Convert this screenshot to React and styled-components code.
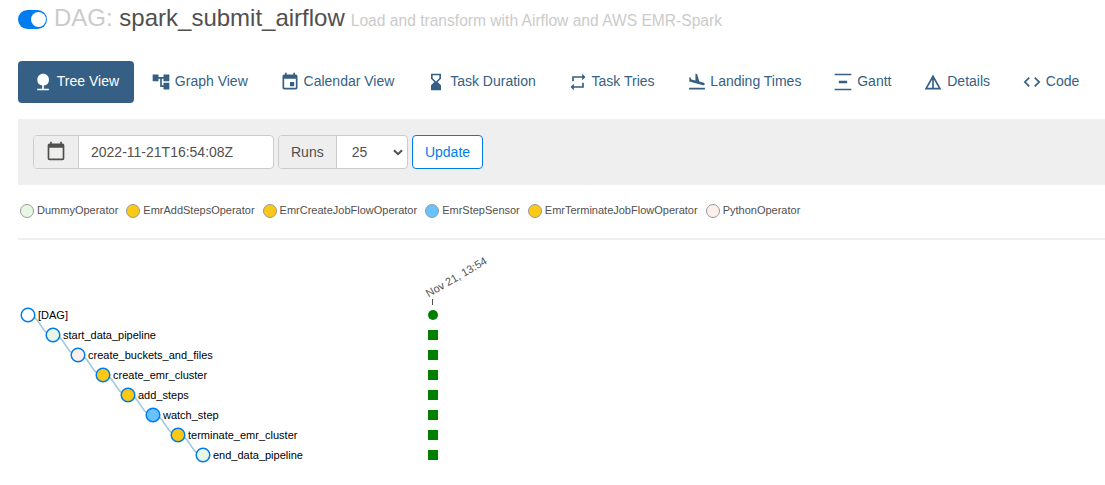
import React from "react";
import styled, { createGlobalStyle } from "styled-components";
import {
  MdNature,
  MdAccountTree,
  MdEvent,
  MdHourglassBottom,
  MdRepeat,
  MdFlightLand,
  MdVerticalDistribute,
  MdDetails,
  MdCode,
  MdCalendarToday,
} from "react-icons/md";

const GlobalStyle = createGlobalStyle`
  *, *::before, *::after { box-sizing: border-box; }
  body {
    margin: 0;
    overflow: hidden;
    background: #fff;
    color: #51504f;
    font: 14px/20px "Liberation Sans", Arial, sans-serif;
  }
`;

const Page = styled.main`
  padding-left: 18px;
`;

const Header = styled.header`
  display: flex;
  align-items: baseline;
  height: 36px;
  padding-top: 5px;
`;

const Toggle = styled.span`
  display: flex;
  align-self: flex-start;
  justify-content: flex-end;
  width: 29px;
  height: 19px;
  margin: 5px 7px 0 0;
  padding: 2px 1px;
  border-radius: 10px;
  background: #017cee;

  &::after {
    content: "";
    width: 15px;
    height: 15px;
    border-radius: 50%;
    background: #fff;
  }
`;

const Title = styled.h3`
  margin: 0;
  font-size: 24px;
  font-weight: 400;
  line-height: 26px;
  white-space: pre;
`;

const Muted = styled.span`
  color: #cbcbcb;
`;

const Description = styled(Muted)`
  margin-left: 6px;
  font-size: 15.6px;
`;

const Nav = styled.nav`
  display: flex;
  gap: 2px;
  margin-top: 25px;
`;

const Tab = styled.a`
  display: flex;
  align-items: center;
  gap: 3.8px;
  height: 42px;
  padding: 0 15px 2px;
  border-radius: 4px;
  white-space: nowrap;
  color: ${(p) => (p.$active ? "#fff" : "#355f84")};
  background: ${(p) => (p.$active ? "#355f84" : "transparent")};

  svg {
    flex: none;
    width: 20px;
    height: 20px;
    margin-top: 2px;
  }
`;

const FilterBar = styled.form`
  display: flex;
  gap: 4px;
  height: 66px;
  margin-top: 16px;
  padding: 16px 15px;
  background: #efefef;
`;

const InputGroup = styled.div`
  display: flex;
  width: ${(p) => p.$width}px;
  height: 34px;
  border: 1px solid #ccc;
  border-radius: 4px;
  background: #fff;
  overflow: hidden;
`;

const Addon = styled.span`
  display: flex;
  align-items: center;
  padding: 0 12px;
  border-right: 1px solid #ccc;
  background: #eee;

  svg {
    width: 20px;
    height: 20px;
    margin-top: -2px;
  }
`;

const DateInput = styled.input`
  flex: 1;
  min-width: 0;
  padding: 0 12px;
  border: 0;
  outline: 0;
  background: transparent;
  color: inherit;
  font: inherit;
`;

const RunsValue = styled.span`
  display: flex;
  flex: 1;
  align-items: center;
  justify-content: space-between;
  padding: 0 4px 0 15px;
`;

const UpdateButton = styled.button`
  width: 71px;
  height: 34px;
  padding: 0;
  border: 1px solid #017cee;
  border-radius: 4px;
  background: #fff;
  color: #017cee;
  font: inherit;
`;

const Legend = styled.div`
  display: flex;
  align-items: center;
  gap: 8px;
  height: 53px;
  padding: 0 0 3px 2px;
  font-size: 11px;
`;

const LegendItem = styled.span`
  display: flex;
  align-items: center;
  gap: 3px;
  white-space: nowrap;

  &::before {
    content: "";
    width: 14px;
    height: 14px;
    border: 1px solid #999;
    border-radius: 50%;
    background: ${(p) => p.$color};
    margin-top: 2px;
  }
`;

const Divider = styled.hr`
  height: 2px;
  margin: 0;
  border: 0;
  background: #efefef;
`;

const Chart = styled.svg`
  display: block;
  margin-left: -18px;
  font-size: 11px;

  .link {
    fill: none;
    stroke: #9ecae1;
    stroke-width: 1.5px;
  }
  .node {
    stroke: #017cee;
    stroke-width: 1.5px;
  }
  .label {
    fill: #000;
  }
  .run {
    fill: #008000;
  }
  .date {
    fill: #51504f;
  }
`;

const TABS = [
  ["Tree View", MdNature],
  ["Graph View", MdAccountTree],
  ["Calendar View", MdEvent],
  ["Task Duration", MdHourglassBottom],
  ["Task Tries", MdRepeat],
  ["Landing Times", MdFlightLand],
  ["Gantt", MdVerticalDistribute],
  ["Details", MdDetails],
  ["Code", MdCode],
];

const GREEN = "#e8f7e4";
const YELLOW = "#f9c915";
const BLUE = "#66c3ff";
const PINK = "#ffefeb";

const OPERATORS = [
  ["DummyOperator", GREEN],
  ["EmrAddStepsOperator", YELLOW],
  ["EmrCreateJobFlowOperator", YELLOW],
  ["EmrStepSensor", BLUE],
  ["EmrTerminateJobFlowOperator", YELLOW],
  ["PythonOperator", PINK],
];

const TASKS = [
  ["[DAG]", "#fff"],
  ["start_data_pipeline", GREEN],
  ["create_buckets_and_files", PINK],
  ["create_emr_cluster", YELLOW],
  ["add_steps", YELLOW],
  ["watch_step", BLUE],
  ["terminate_emr_cluster", YELLOW],
  ["end_data_pipeline", GREEN],
];

function TaskTree() {
  return (
    <Chart width="1105" height="245" viewBox="0 240 1105 245">
      {TASKS.slice(1).map(([name], i) => {
        const x = 28 + i * 25;
        const y = 315 + i * 20;
        return (
          <path
            key={name}
            className="link"
            d={`M${x} ${y}C${x + 12.5} ${y} ${x + 12.5} ${y + 20} ${x + 25} ${y + 20}`}
          />
        );
      })}
      {TASKS.map(([name, color], i) => (
        <g key={name} transform={`translate(${28 + i * 25} ${315 + i * 20})`}>
          <circle className="node" r="6.8" fill={color} />
          <text className="label" x="10" y="3.5">{name}</text>
        </g>
      ))}
      <text className="date" transform="translate(428.5 297.5) rotate(-30)">
        Nov 21, 13:54
      </text>
      <path d="M432.5 299v6" stroke="#51504f" />
      <circle className="run" cx="433" cy="315" r="5" />
      {TASKS.slice(1).map(([name], i) => (
        <rect key={name} className="run" x="428" y={330 + i * 20} width="10" height="10" />
      ))}
    </Chart>
  );
}

export default function App() {
  return (
    <Page>
      <GlobalStyle />
      <Header>
        <Toggle />
        <Title>
          <Muted>DAG: </Muted>spark_submit_airflow
        </Title>
        <Description>Load and transform with Airflow and AWS EMR-Spark</Description>
      </Header>
      <Nav>
        {TABS.map(([label, Icon], i) => (
          <Tab key={label} $active={i === 0}>
            <Icon />
            {label}
          </Tab>
        ))}
      </Nav>
      <FilterBar>
        <InputGroup $width={241}>
          <Addon>
            <MdCalendarToday />
          </Addon>
          <DateInput defaultValue="2022-11-21T16:54:08Z" />
        </InputGroup>
        <InputGroup $width={130}>
          <Addon>Runs</Addon>
          <RunsValue>
            25
            <svg width="10" height="7" viewBox="0 0 10 7">
              <path d="M1 1.2l4 4 4-4" fill="none" stroke="#51504f" strokeWidth="2" />
            </svg>
          </RunsValue>
        </InputGroup>
        <UpdateButton type="button">Update</UpdateButton>
      </FilterBar>
      <Legend>
        {OPERATORS.map(([name, color]) => (
          <LegendItem key={name} $color={color}>
            {name}
          </LegendItem>
        ))}
      </Legend>
      <Divider />
      <TaskTree />
    </Page>
  );
}
